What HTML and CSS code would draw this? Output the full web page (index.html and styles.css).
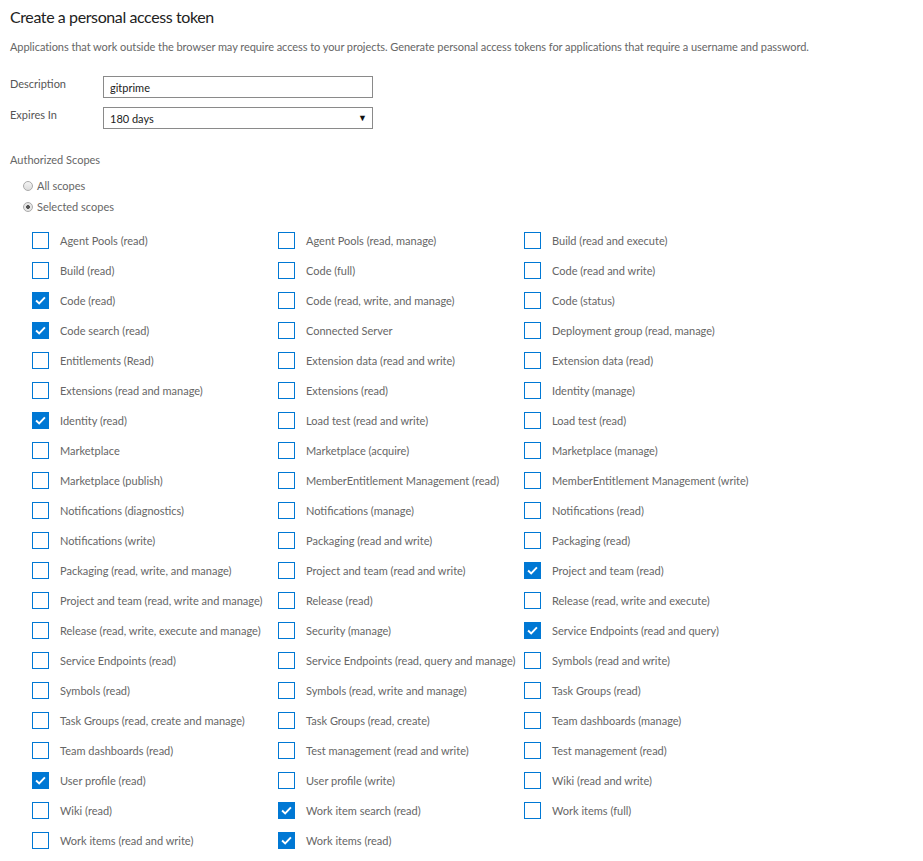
FILE: index.html
```html
<!DOCTYPE html>
<html lang="en">
<head>
    <meta charset="UTF-8">
    <title>Create a personal access token</title>
    <link rel="stylesheet" href="styles.css">
</head>
<body>

    <h1>Create a personal access token</h1>
    <p class="intro">Applications that work outside the browser may require access to your projects. Generate personal access tokens for applications that require a username and password.</p>

    <!-- Token form -->
    <div class="form-row">
        <label class="form-label" for="description">Description</label>
        <input type="text" id="description" class="input-field" value="gitprime">
    </div>
    <div class="form-row">
        <label class="form-label" for="expires">Expires In</label>
        <div class="select-wrap">
            <select id="expires" class="input-field">
                <option>180 days</option>
                <option>90 days</option>
                <option>30 days</option>
            </select>
        </div>
    </div>

    <div class="section-title">Authorized Scopes</div>
    <div class="radios">
        <label class="radio"><span class="radio-dot"></span>All scopes</label>
        <label class="radio"><span class="radio-dot selected"></span>Selected scopes</label>
    </div>

    <!-- Scope list -->
    <div class="scopes">
        <label class="scope"><span class="box"></span>Agent Pools (read)</label>
        <label class="scope"><span class="box"></span>Agent Pools (read, manage)</label>
        <label class="scope"><span class="box"></span>Build (read and execute)</label>

        <label class="scope"><span class="box"></span>Build (read)</label>
        <label class="scope"><span class="box"></span>Code (full)</label>
        <label class="scope"><span class="box"></span>Code (read and write)</label>

        <label class="scope"><span class="box checked"><svg viewBox="0 0 17 17"><path d="M3.5 8.5 L7 11.8 L13.5 5"/></svg></span>Code (read)</label>
        <label class="scope"><span class="box"></span>Code (read, write, and manage)</label>
        <label class="scope"><span class="box"></span>Code (status)</label>

        <label class="scope"><span class="box checked"><svg viewBox="0 0 17 17"><path d="M3.5 8.5 L7 11.8 L13.5 5"/></svg></span>Code search (read)</label>
        <label class="scope"><span class="box"></span>Connected Server</label>
        <label class="scope"><span class="box"></span>Deployment group (read, manage)</label>

        <label class="scope"><span class="box"></span>Entitlements (Read)</label>
        <label class="scope"><span class="box"></span>Extension data (read and write)</label>
        <label class="scope"><span class="box"></span>Extension data (read)</label>

        <label class="scope"><span class="box"></span>Extensions (read and manage)</label>
        <label class="scope"><span class="box"></span>Extensions (read)</label>
        <label class="scope"><span class="box"></span>Identity (manage)</label>

        <label class="scope"><span class="box checked"><svg viewBox="0 0 17 17"><path d="M3.5 8.5 L7 11.8 L13.5 5"/></svg></span>Identity (read)</label>
        <label class="scope"><span class="box"></span>Load test (read and write)</label>
        <label class="scope"><span class="box"></span>Load test (read)</label>

        <label class="scope"><span class="box"></span>Marketplace</label>
        <label class="scope"><span class="box"></span>Marketplace (acquire)</label>
        <label class="scope"><span class="box"></span>Marketplace (manage)</label>

        <label class="scope"><span class="box"></span>Marketplace (publish)</label>
        <label class="scope"><span class="box"></span>MemberEntitlement Management (read)</label>
        <label class="scope"><span class="box"></span>MemberEntitlement Management (write)</label>

        <label class="scope"><span class="box"></span>Notifications (diagnostics)</label>
        <label class="scope"><span class="box"></span>Notifications (manage)</label>
        <label class="scope"><span class="box"></span>Notifications (read)</label>

        <label class="scope"><span class="box"></span>Notifications (write)</label>
        <label class="scope"><span class="box"></span>Packaging (read and write)</label>
        <label class="scope"><span class="box"></span>Packaging (read)</label>

        <label class="scope"><span class="box"></span>Packaging (read, write, and manage)</label>
        <label class="scope"><span class="box"></span>Project and team (read and write)</label>
        <label class="scope"><span class="box checked"><svg viewBox="0 0 17 17"><path d="M3.5 8.5 L7 11.8 L13.5 5"/></svg></span>Project and team (read)</label>

        <label class="scope"><span class="box"></span>Project and team (read, write and manage)</label>
        <label class="scope"><span class="box"></span>Release (read)</label>
        <label class="scope"><span class="box"></span>Release (read, write and execute)</label>

        <label class="scope"><span class="box"></span>Release (read, write, execute and manage)</label>
        <label class="scope"><span class="box"></span>Security (manage)</label>
        <label class="scope"><span class="box checked"><svg viewBox="0 0 17 17"><path d="M3.5 8.5 L7 11.8 L13.5 5"/></svg></span>Service Endpoints (read and query)</label>

        <label class="scope"><span class="box"></span>Service Endpoints (read)</label>
        <label class="scope"><span class="box"></span>Service Endpoints (read, query and manage)</label>
        <label class="scope"><span class="box"></span>Symbols (read and write)</label>

        <label class="scope"><span class="box"></span>Symbols (read)</label>
        <label class="scope"><span class="box"></span>Symbols (read, write and manage)</label>
        <label class="scope"><span class="box"></span>Task Groups (read)</label>

        <label class="scope"><span class="box"></span>Task Groups (read, create and manage)</label>
        <label class="scope"><span class="box"></span>Task Groups (read, create)</label>
        <label class="scope"><span class="box"></span>Team dashboards (manage)</label>

        <label class="scope"><span class="box"></span>Team dashboards (read)</label>
        <label class="scope"><span class="box"></span>Test management (read and write)</label>
        <label class="scope"><span class="box"></span>Test management (read)</label>

        <label class="scope"><span class="box checked"><svg viewBox="0 0 17 17"><path d="M3.5 8.5 L7 11.8 L13.5 5"/></svg></span>User profile (read)</label>
        <label class="scope"><span class="box"></span>User profile (write)</label>
        <label class="scope"><span class="box"></span>Wiki (read and write)</label>

        <label class="scope"><span class="box"></span>Wiki (read)</label>
        <label class="scope"><span class="box checked"><svg viewBox="0 0 17 17"><path d="M3.5 8.5 L7 11.8 L13.5 5"/></svg></span>Work item search (read)</label>
        <label class="scope"><span class="box"></span>Work items (full)</label>

        <label class="scope"><span class="box"></span>Work items (read and write)</label>
        <label class="scope"><span class="box checked"><svg viewBox="0 0 17 17"><path d="M3.5 8.5 L7 11.8 L13.5 5"/></svg></span>Work items (read)</label>
    </div>

</body>
</html>
```

FILE: styles.css
```css
body {
    margin: 0;
    padding: 0 10px;
    font-family: "Lato", "Open Sans", sans-serif;
    font-size: 11px;
    color: #666;
    background: #fff;
}

h1 {
    margin: 0;
    padding-top: 4px;
    font-size: 16px;
    font-weight: 400;
    line-height: 26px;
    letter-spacing: -0.4px;
    color: #222;
}

.intro {
    margin: 9px 0 21px;
    line-height: 16px;
    letter-spacing: -0.06px;
    color: #666;
}

.form-row {
    display: flex;
    align-items: flex-start;
    margin-bottom: 9px;
}

.form-label {
    width: 93px;
    line-height: 16px;
    color: #555;
}

.input-field {
    box-sizing: border-box;
    width: 270px;
    height: 22px;
    margin: 0;
    padding: 0 6px;
    border: 1px solid #8a8a8a;
    border-radius: 0;
    font-family: inherit;
    font-size: 11px;
    color: #222;
    background: #fff;
}

.select-wrap {
    position: relative;
}

.select-wrap select {
    -webkit-appearance: none;
    appearance: none;
}

.select-wrap::after {
    content: "\25BC";
    position: absolute;
    right: 6px;
    top: 5px;
    font-size: 9px;
    color: #111;
    pointer-events: none;
}

.section-title {
    margin-top: 23px;
    line-height: 16px;
    color: #666;
}

.radios {
    padding: 7px 0 0 13px;
}

.radio {
    display: flex;
    align-items: center;
    height: 21px;
    color: #666;
}

.radio-dot {
    box-sizing: border-box;
    width: 10px;
    height: 10px;
    margin-right: 4px;
    border: 1px solid #aaa;
    border-radius: 50%;
    background: linear-gradient(#f4f4f4, #dcdcdc);
}

.radio-dot.selected {
    background: radial-gradient(circle, #555 0, #555 1.6px, #e6e6e6 2.2px);
}

.scopes {
    display: grid;
    grid-template-columns: repeat(3, 246px);
    padding: 8px 0 0 22px;
}

.scope {
    display: flex;
    align-items: center;
    height: 30px;
    color: #666;
    white-space: nowrap;
}

.box {
    box-sizing: border-box;
    flex: none;
    width: 17px;
    height: 17px;
    margin-right: 11px;
    border: 1px solid #0078d4;
    background: #fff;
}

.box.checked {
    background: #0078d4;
}

.box svg {
    display: block;
    width: 15px;
    height: 15px;
}

.box svg path {
    fill: none;
    stroke: #fff;
    stroke-width: 2.2;
}
```
